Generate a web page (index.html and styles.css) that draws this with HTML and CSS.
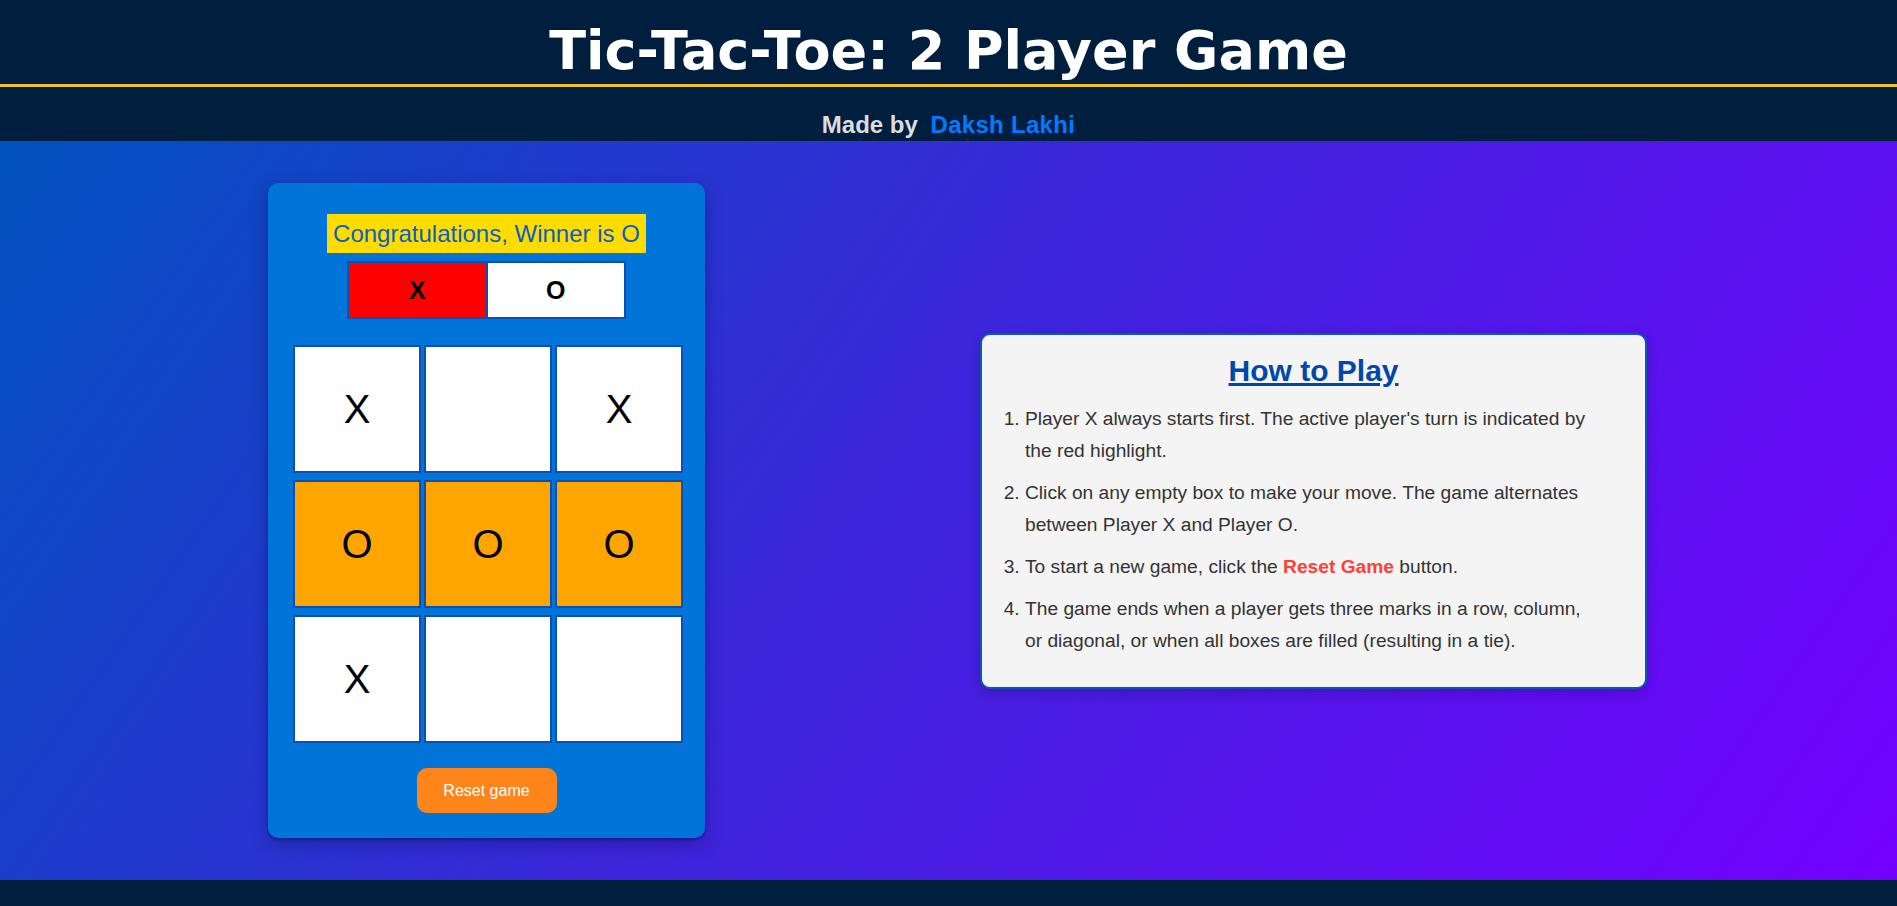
FILE: index.html
```html
<!DOCTYPE html>
<html lang="en">
<head>
<meta charset="utf-8">
<title>Tic-Tac-Toe: 2 Player Game</title>
<link rel="stylesheet" href="styles.css">
</head>
<body>
<header class="site-header">
  <h1 class="title">Tic-Tac-Toe: 2 Player Game</h1>
  <p class="byline">Made by <a class="author" href="#">Daksh Lakhi</a></p>
</header>
<main class="main">
  <section class="game-card">
    <div class="status">Congratulations, Winner is O</div>
    <div class="turn">
      <div class="turn-x">X</div>
      <div class="turn-o">O</div>
    </div>
    <div class="board">
      <div class="cell">X</div>
      <div class="cell"></div>
      <div class="cell">X</div>
      <div class="cell win">O</div>
      <div class="cell win">O</div>
      <div class="cell win">O</div>
      <div class="cell">X</div>
      <div class="cell"></div>
      <div class="cell"></div>
    </div>
    <button class="reset">Reset game</button>
  </section>
  <section class="howto">
    <h2 class="howto-title">How to Play</h2>
    <ol class="howto-list">
      <li>Player X always starts first. The active player's turn is indicated by the red highlight.</li>
      <li>Click on any empty box to make your move. The game alternates between Player X and Player O.</li>
      <li>To start a new game, click the <strong class="hl">Reset Game</strong> button.</li>
      <li>The game ends when a player gets three marks in a row, column, or diagonal, or when all boxes are filled (resulting in a tie).</li>
    </ol>
  </section>
</main>
<footer class="site-footer"></footer>
</body>
</html>
```
FILE: styles.css
```css
* { box-sizing: border-box; }
html, body { margin: 0; padding: 0; }
body {
  font-family: "Liberation Sans", Arial, sans-serif;
  background: #001f3f;
}
.site-header {
  background: #001f3f;
  text-align: center;
}
.title {
  margin: 0;
  padding: 20px 0 2px;
  line-height: 62px;
  font-family: "DejaVu Sans", Verdana, sans-serif;
  font-weight: bold;
  font-size: 54px;
  color: #ffffff;
  border-bottom: 3px solid #f4c22b;
}
.byline {
  margin: 0;
  padding: 24px 0 0;
  height: 54px;
  font-family: "Liberation Sans", Arial, sans-serif;
  font-weight: bold;
  font-size: 24px;
  line-height: 28px;
  color: #dddddd;
}
.author {
  color: #007bff;
  text-decoration: none;
  margin-left: 6px;
  letter-spacing: 0.3px;
}
.main {
  height: 739px;
  display: flex;
  align-items: center;
  padding-left: 268px;
  gap: 275px;
  background: linear-gradient(125deg, #0052bf 0%, #3a27d9 45%, #7300ff 100%);
}
.game-card {
  width: 437px;
  height: 655px;
  background: #0074d9;
  border-radius: 10px;
  box-shadow: 0 2px 2px rgba(0, 30, 120, 0.5), 0 6px 18px rgba(0, 0, 60, 0.3);
  display: flex;
  flex-direction: column;
  align-items: center;
  padding-top: 31px;
}
.status {
  background: #ffdc00;
  color: #0a5fc6;
  font-size: 24px;
  line-height: 39px;
  height: 39px;
  padding: 0 6px;
}
.turn {
  margin-top: 8px;
  display: flex;
  width: 279px;
  height: 58px;
  border: 2px solid #0b4fb3;
}
.turn-x, .turn-o {
  flex: 1;
  display: flex;
  align-items: center;
  justify-content: center;
  font-weight: bold;
  font-size: 25px;
  color: #000;
}
.turn-x {
  background: #ff0000;
  border-right: 2px solid #0b4fb3;
}
.turn-o { background: #ffffff; }
.board {
  margin-top: 26px;
  margin-left: 3px;
  display: grid;
  grid-template-columns: repeat(3, 128px);
  grid-template-rows: repeat(3, 128px);
  column-gap: 3px;
  row-gap: 7px;
}
.cell {
  background: #ffffff;
  border: 2px solid #0b4fb3;
  display: flex;
  align-items: center;
  justify-content: center;
  font-size: 40px;
  color: #000;
}
.cell.win { background: #ffa500; }
.reset {
  margin-top: 25px;
  width: 140px;
  height: 45px;
  border: none;
  border-radius: 10px;
  background: #ff851b;
  color: #ffffff;
  font-family: "Liberation Sans", Arial, sans-serif;
  font-size: 16px;
}
.howto {
  width: 667px;
  background: #f4f4f4;
  border: 2px solid #0b56b8;
  border-radius: 10px;
  padding: 19px 20px 20px;
  box-shadow: 0 4px 12px rgba(0, 0, 0, 0.2);
}
.howto-title {
  margin: 0 0 15px;
  text-align: center;
  font-size: 30px;
  line-height: 34px;
  color: #0047ab;
  text-decoration: underline;
}
.howto-list {
  margin: 0;
  padding: 0 40px 0 23px;
  font-size: 19.2px;
  line-height: 32px;
  color: #333333;
}
.howto-list li { margin-bottom: 10px; }
.hl { color: #ff4136; }
.site-footer {
  height: 26px;
  background: #001f3f;
}
```
